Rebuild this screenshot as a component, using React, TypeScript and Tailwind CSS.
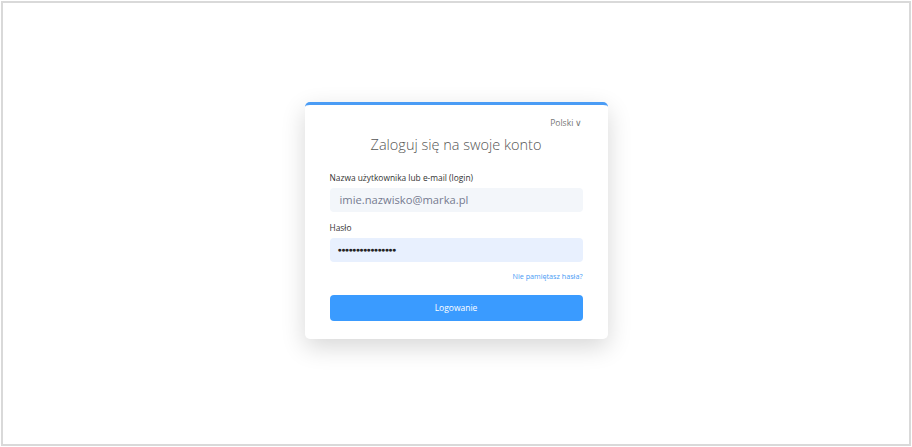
import React from "react";

export default function App() {
  return (
    <div className="h-[447px] w-[912px] bg-white p-px" style={{ fontFamily: '"Open Sans", "Noto Sans", sans-serif' }}>
      <div className="flex h-full w-full items-center justify-center border-2 border-[#d9d9d9] bg-white">
        <div className="mt-[-6px] w-[303px] rounded-[5px] border-t-[3px] border-[#4a9cf5] bg-white px-[25px] pb-[18px] pt-[12px] shadow-[0_8px_24px_rgba(0,0,0,0.16)]">
          <div className="flex justify-end text-[8.5px] leading-[12px] text-[#777]">
            <span>Polski ∨</span>
          </div>
          <h1 className="mt-[5px] text-center text-[14.5px] font-light leading-[22px] text-[#555]">
            Zaloguj się na swoje konto
          </h1>
          <label className="mt-[16px] block text-[8.4px] leading-[12px] text-[#333]">
            Nazwa użytkownika lub e-mail (login)
          </label>
          <div className="mt-[4px] flex h-[24px] items-center rounded-[4px] bg-[#f3f6fa] px-[10px] text-[11.2px] text-[#767b90]">
            imie.nazwisko@marka.pl
          </div>
          <label className="mt-[10px] block text-[8.4px] leading-[12px] text-[#333]">Hasło</label>
          <div className="mt-[4px] flex h-[24px] items-center rounded-[4px] bg-[#e8f0fe] px-[8px] text-[7px] tracking-[-0.6px] text-[#222]">
            ●●●●●●●●●●●●●●●●
          </div>
          <div className="mt-[9px] flex justify-end text-[7.2px] leading-[10px] text-[#4a9cf5]">
            Nie pamiętasz hasła?
          </div>
          <button className="mt-[14px] flex h-[26px] w-full items-center justify-center rounded-[4px] bg-[#3a9bff] text-[8.5px] text-white">
            Logowanie
          </button>
        </div>
      </div>
    </div>
  );
}
